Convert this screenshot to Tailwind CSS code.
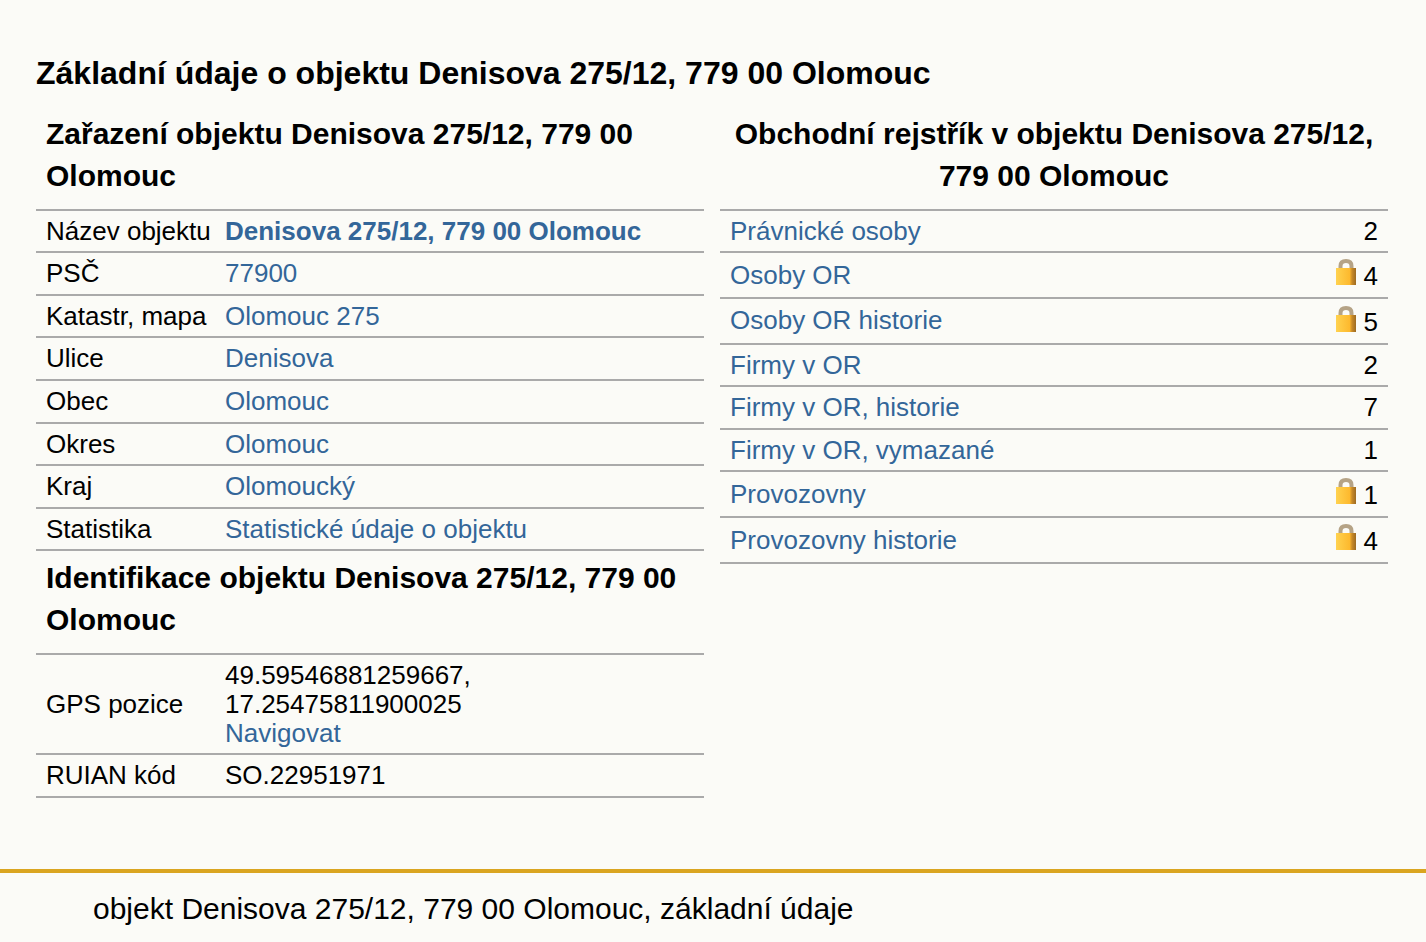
<!DOCTYPE html>
<html lang="cs">
<head>
    <meta charset="UTF-8">
    <title>Denisova 275/12</title>
    <script src="https://cdn.jsdelivr.net/npm/@tailwindcss/browser@4"></script>
</head>
<body class="bg-[#fbfbf7] text-black font-['Liberation_Sans',Arial,sans-serif] text-[26px] leading-[29px] h-[942px] overflow-hidden">

    <!-- Hlavni obsah -->
    <main class="h-[869px] px-[36px] pt-[52px]">
        <h1 class="text-[32px] leading-[42px] font-bold mb-[19px]">Základní údaje o objektu Denisova 275/12, 779 00 Olomouc</h1>

        <div class="grid grid-cols-[668px_668px] gap-x-[16px]">
            <!-- Levy sloupec -->
            <section>
                <h2 class="text-[30px] leading-[42px] font-bold px-[10px] pb-[12px]">Zařazení objektu Denisova 275/12, 779 00 Olomouc</h2>
                <table class="w-full border-t-2 border-[#aaaaaa]">
                    <tbody>
                        <tr class="border-b-2 border-[#aaaaaa] h-[42px]"><td class="pl-[10px] w-[179px]">Název objektu</td><td class="pl-[10px]"><a href="#" class="font-bold text-[#336699]">Denisova 275/12, 779 00 Olomouc</a></td></tr>
                        <tr class="border-b-2 border-[#aaaaaa] h-[43px]"><td class="pl-[10px]">PSČ</td><td class="pl-[10px]"><a href="#" class="text-[#336699]">77900</a></td></tr>
                        <tr class="border-b-2 border-[#aaaaaa] h-[42px]"><td class="pl-[10px]">Katastr, mapa</td><td class="pl-[10px]"><a href="#" class="text-[#336699]">Olomouc 275</a></td></tr>
                        <tr class="border-b-2 border-[#aaaaaa] h-[43px]"><td class="pl-[10px]">Ulice</td><td class="pl-[10px]"><a href="#" class="text-[#336699]">Denisova</a></td></tr>
                        <tr class="border-b-2 border-[#aaaaaa] h-[43px]"><td class="pl-[10px]">Obec</td><td class="pl-[10px]"><a href="#" class="text-[#336699]">Olomouc</a></td></tr>
                        <tr class="border-b-2 border-[#aaaaaa] h-[42px]"><td class="pl-[10px]">Okres</td><td class="pl-[10px]"><a href="#" class="text-[#336699]">Olomouc</a></td></tr>
                        <tr class="border-b-2 border-[#aaaaaa] h-[43px]"><td class="pl-[10px]">Kraj</td><td class="pl-[10px]"><a href="#" class="text-[#336699]">Olomoucký</a></td></tr>
                        <tr class="border-b-2 border-[#aaaaaa] h-[42px]"><td class="pl-[10px]">Statistika</td><td class="pl-[10px]"><a href="#" class="text-[#336699]">Statistické údaje o objektu</a></td></tr>
                    </tbody>
                </table>

                <h2 class="text-[30px] leading-[42px] font-bold px-[10px] pb-[12px] pt-[6px]">Identifikace objektu Denisova 275/12, 779 00 Olomouc</h2>
                <table class="w-full border-t-2 border-[#aaaaaa]">
                    <tbody>
                        <tr class="border-b-2 border-[#aaaaaa] h-[100px]"><td class="pl-[10px] w-[179px]">GPS pozice</td><td class="pl-[10px]">49.59546881259667,<br>17.25475811900025<br><a href="#" class="text-[#336699]">Navigovat</a></td></tr>
                        <tr class="border-b-2 border-[#aaaaaa] h-[43px]"><td class="pl-[10px]">RUIAN kód</td><td class="pl-[10px]">SO.22951971</td></tr>
                    </tbody>
                </table>
            </section>

            <!-- Pravy sloupec -->
            <section>
                <h2 class="text-[30px] leading-[42px] font-bold px-[10px] pb-[12px] text-center">Obchodní rejstřík v objektu Denisova 275/12, 779 00 Olomouc</h2>
                <table class="w-full border-t-2 border-[#aaaaaa]">
                    <tbody>
                        <tr class="border-b-2 border-[#aaaaaa] h-[42px]"><td class="pl-[10px]"><a href="#" class="text-[#336699]">Právnické osoby</a></td><td class="pr-[10px] text-right">2</td></tr>
                        <tr class="border-b-2 border-[#aaaaaa] h-[46px]"><td class="pl-[10px]"><a href="#" class="text-[#336699]">Osoby OR</a></td><td class="pr-[10px]"><div class="flex justify-end items-start gap-[8px]"><svg class="w-[20px] h-[26px]" viewBox="0 0 20 26"><defs><linearGradient id="lockBody" x1="0" x2="1" y1="0" y2="0"><stop offset="0" stop-color="#ffd24f"/><stop offset="0.68" stop-color="#fdb92e"/><stop offset="0.8" stop-color="#c98a26"/><stop offset="1" stop-color="#9c6a22"/></linearGradient></defs><path d="M4.5 10V7C4.5 3.5 6.5 2 10 2S15.500 3.500 15.500 7V10" fill="none" stroke="#b5a386" stroke-width="4"/><rect y="9" width="20" height="17" fill="url(#lockBody)"/></svg><span class="mt-[3px]">4</span></div></td></tr>
                        <tr class="border-b-2 border-[#aaaaaa] h-[46px]"><td class="pl-[10px] pb-[1px]"><a href="#" class="text-[#336699]">Osoby OR historie</a></td><td class="pr-[10px]"><div class="flex justify-end items-start gap-[8px]"><svg class="w-[20px] h-[26px]" viewBox="0 0 20 26"><path d="M4.5 10V7C4.5 3.5 6.5 2 10 2S15.500 3.500 15.500 7V10" fill="none" stroke="#b5a386" stroke-width="4"/><rect y="9" width="20" height="17" fill="url(#lockBody)"/></svg><span class="mt-[2px]">5</span></div></td></tr>
                        <tr class="border-b-2 border-[#aaaaaa] h-[42px]"><td class="pl-[10px]"><a href="#" class="text-[#336699]">Firmy v OR</a></td><td class="pr-[10px] text-right">2</td></tr>
                        <tr class="border-b-2 border-[#aaaaaa] h-[43px]"><td class="pl-[10px]"><a href="#" class="text-[#336699]">Firmy v OR, historie</a></td><td class="pr-[10px] text-right">7</td></tr>
                        <tr class="border-b-2 border-[#aaaaaa] h-[42px]"><td class="pl-[10px]"><a href="#" class="text-[#336699]">Firmy v OR, vymazané</a></td><td class="pr-[10px] text-right">1</td></tr>
                        <tr class="border-b-2 border-[#aaaaaa] h-[46px]"><td class="pl-[10px]"><a href="#" class="text-[#336699]">Provozovny</a></td><td class="pr-[10px]"><div class="flex justify-end items-start gap-[8px]"><svg class="w-[20px] h-[26px]" viewBox="0 0 20 26"><path d="M4.5 10V7C4.5 3.5 6.5 2 10 2S15.500 3.500 15.500 7V10" fill="none" stroke="#b5a386" stroke-width="4"/><rect y="9" width="20" height="17" fill="url(#lockBody)"/></svg><span class="mt-[3px]">1</span></div></td></tr>
                        <tr class="border-b-2 border-[#aaaaaa] h-[46px]"><td class="pl-[10px]"><a href="#" class="text-[#336699]">Provozovny historie</a></td><td class="pr-[10px]"><div class="flex justify-end items-start gap-[8px]"><svg class="w-[20px] h-[26px]" viewBox="0 0 20 26"><path d="M4.5 10V7C4.5 3.5 6.5 2 10 2S15.500 3.500 15.500 7V10" fill="none" stroke="#b5a386" stroke-width="4"/><rect y="9" width="20" height="17" fill="url(#lockBody)"/></svg><span class="mt-[3px]">4</span></div></td></tr>
                    </tbody>
                </table>
            </section>
        </div>
    </main>

    <!-- Paticka -->
    <footer class="border-t-[4px] border-[#daa520] pl-[93px] pt-[18px] text-[30px] leading-[36px]">objekt Denisova 275/12, 779 00 Olomouc, základní údaje</footer>
</body>
</html>
